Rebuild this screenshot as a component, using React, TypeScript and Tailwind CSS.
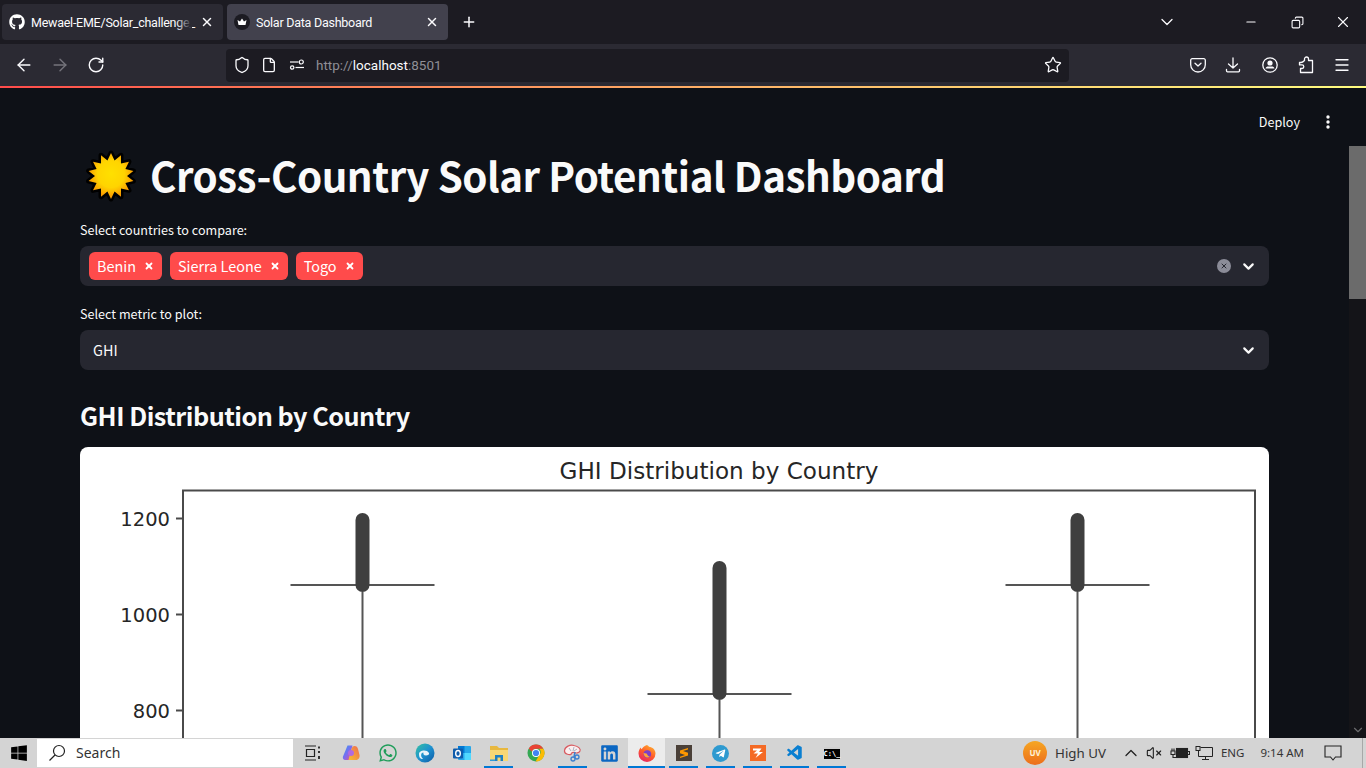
import React from "react";
import { ArrowLeft, ArrowRight, RotateCw, Shield, File, Star, Menu, ChevronDown, ChevronUp, Minus, X, Plus, Copy, VolumeX } from "lucide-react";
import { FaGithub, FaWindows, FaWhatsapp, FaLinkedin, FaTelegramPlane } from "react-icons/fa";
import { VscVscode } from "react-icons/vsc";

const chartFont = "DejaVu Sans, sans-serif";

function Sun() {
  const pts: string[] = [];
  const n = 14;
  for (let i = 0; i < n * 2; i++) {
    const r = i % 2 === 0 ? 23 : 16;
    const a = (i * Math.PI) / n - Math.PI / 2;
    pts.push(`${27 + r * Math.cos(a)},${27 + r * Math.sin(a)}`);
  }
  return (
    <svg width="54" height="54" viewBox="0 0 54 54" className="block">
      <defs>
        <radialGradient id="sung" cx="50%" cy="45%" r="50%">
          <stop offset="0%" stopColor="#ffe000" />
          <stop offset="60%" stopColor="#ffd400" />
          <stop offset="100%" stopColor="#fb9c00" />
        </radialGradient>
      </defs>
      <polygon points={pts.join(" ")} fill="#000" stroke="#000" strokeWidth="5" strokeLinejoin="round" />
      <polygon points={pts.join(" ")} fill="url(#sung)" />
    </svg>
  );
}

function Tag({ label }: { label: string }) {
  return (
    <div className="flex h-7 items-center rounded-md bg-[#ff4b4b] pl-2 pr-2 text-[14.400px] leading-7 text-white">
      <span>{label}</span>
      <X size={10} strokeWidth={1.8} absoluteStrokeWidth className="ml-[8px]" />
    </div>
  );
}

function Chevron() {
  return <ChevronDown size={17} strokeWidth={3} className="text-[#fafafa]" />;
}

function Pocket() {
  return (
    <svg width="16" height="16" viewBox="0 0 16 16" fill="none" stroke="#fbfbfe" strokeWidth="1.300" strokeLinejoin="round" strokeLinecap="round" className="block">
      <path d="M2.200 1.700h11.600a1.500 1.500 0 0 1 1.500 1.500v4.500a7.300 7.300 0 0 1-14.600 0V3.200a1.500 1.500 0 0 1 1.500-1.500z" />
      <path d="M5 6.200 8 9l3-2.800" />
    </svg>
  );
}

function DownloadIcon() {
  return (
    <svg width="16" height="16" viewBox="0 0 16 16" fill="none" stroke="#fbfbfe" strokeWidth="1.300" strokeLinecap="round" strokeLinejoin="round" className="block">
      <path d="M8 1v10M3.500 7 8 11l4.500-4" />
      <path d="M1.500 12.500v1.300c0 .6.400 1 1 1h11c.6 0 1-.4 1-1v-1.300" />
    </svg>
  );
}

function Account() {
  return (
    <svg width="16" height="16" viewBox="0 0 16 16" className="block">
      <circle cx="8" cy="8" r="7.200" fill="none" stroke="#fbfbfe" strokeWidth="1.300" />
      <circle cx="8" cy="6" r="2.600" fill="#fbfbfe" />
      <path d="M3.500 11.500c.5-1.500 1.500-2 2.500-2h4c1 0 2 .5 2.500 2z" fill="#fbfbfe" />
    </svg>
  );
}

function PuzzleIcon() {
  return (
    <svg width="16" height="18" viewBox="0 0 16 18" fill="none" stroke="#fbfbfe" strokeWidth="1.300" strokeLinejoin="round" className="block">
      <path d="M6.500 4.500V3a2 2 0 0 1 4 0v1.500H14.500V16.500H2.500V12.500H4a1.800 1.800 0 0 0 0-3.600H1.500V6.500H3c1 0 2-.5 3.500-2z" />
    </svg>
  );
}

function Sliders() {
  return (
    <svg width="16" height="16" viewBox="0 0 16 16" fill="none" stroke="#fbfbfe" strokeWidth="1.200" className="block">
      <path d="M1 5h8.500" />
      <circle cx="12.300" cy="5" r="2" />
      <circle cx="3.200" cy="10.500" r="1.700" />
      <path d="M6.500 10.500H15" />
    </svg>
  );
}

function Chart() {
  const stroke = "#4a4a4a";
  const boxes = [
    { x: 282.5, top: 66, bottom: 145, cap: 138 },
    { x: 639.5, top: 114, bottom: 253, cap: 247 },
    { x: 997.5, top: 66, bottom: 145, cap: 138 },
  ];
  return (
    <svg width="1189" height="300" viewBox="0 0 1189 300" className="block">
      <text x="639" y="32" textAnchor="middle" fontFamily={chartFont} fontSize="23.100" fill="#262626">GHI Distribution by Country</text>
      <path d="M103 300V43.500H1175V300" fill="none" stroke={stroke} strokeWidth="2" />
      {[{ y: 71.500, t: "1200" }, { y: 167.500, t: "1000" }, { y: 263.500, t: "800" }].map((k) => (
        <g key={k.t}>
          <path d={`M96 ${k.y}H103`} stroke={stroke} strokeWidth="2" />
          <text x="90" y={k.y + 7.500} textAnchor="end" fontFamily={chartFont} fontSize="19.500" fill="#262626">{k.t}</text>
        </g>
      ))}
      {boxes.map((b) => (
        <g key={b.x}>
          <path d={`M${b.x} ${b.bottom}V300`} stroke="#555" strokeWidth="2" />
          <path d={`M${b.x - 72} ${b.cap}H${b.x + 72}`} stroke="#555" strokeWidth="2" />
          <rect x={b.x - 7} y={b.top} width="14" height={b.bottom - b.top} rx="7" fill="#3f3f3f" />
        </g>
      ))}
    </svg>
  );
}

function TaskItem({ children, line, active }: { children: React.ReactNode; line?: boolean; active?: boolean }) {
  return (
    <div className={`relative flex h-[30px] w-[37px] shrink-0 items-center justify-center ${active ? "bg-[#ececec]" : ""}`}>
      {children}
      {line && <div className={`absolute bottom-0 h-[2px] bg-[#0078d4] ${active ? "inset-x-0" : "inset-x-[4px]"}`} />}
    </div>
  );
}

function CopilotIcon() {
  return (
    <svg width="18" height="18" viewBox="0 0 18 18">
      <defs>
        <linearGradient id="cp1" x1="0" y1="0" x2="1" y2="1"><stop offset="0" stopColor="#2d9cf0" /><stop offset="0.5" stopColor="#7a6df0" /><stop offset="1" stopColor="#f0508a" /></linearGradient>
        <linearGradient id="cp2" x1="0" y1="1" x2="1" y2="0"><stop offset="0" stopColor="#f5c030" /><stop offset="1" stopColor="#f06a50" /></linearGradient>
      </defs>
      <path d="M5.500 1.500h5L7 16H3.500C1 16 .5 14 1 12.500z" fill="url(#cp1)" />
      <path d="M12.500 2c2 0 3 1 3.500 3l1.500 6c.5 2.500-1 5-3.500 5H6.500l3-11c.5-2 1.500-3 3-3z" fill="url(#cp2)" />
      <circle cx="9" cy="9" r="3" fill="#b06ae0" />
    </svg>
  );
}

function EdgeIcon() {
  return (
    <svg width="20" height="20" viewBox="0 0 20 20">
      <defs>
        <linearGradient id="ed" x1="0" y1="0" x2="1" y2="1"><stop offset="0" stopColor="#35c1a0" /><stop offset="0.5" stopColor="#1e92d0" /><stop offset="1" stopColor="#0c59a4" /></linearGradient>
      </defs>
      <circle cx="10" cy="10" r="9.500" fill="url(#ed)" />
      <path d="M4 11c0-4 8-5 10-1 .6 1.500-1 2.500-3 2.500-2.500 0-3-2-2.500-3C6 9.500 5 13 8 16c-3 0-4-2-4-5z" fill="#e8f4fb" />
    </svg>
  );
}

function OutlookIcon() {
  return (
    <svg width="20" height="20" viewBox="0 0 20 20">
      <rect x="6" y="3" width="13" height="14" rx="1" fill="#28a8ea" />
      <rect x="6" y="3" width="6.500" height="7" fill="#0078d4" />
      <rect x="12.500" y="10" width="6.500" height="7" fill="#50d9ff" />
      <rect x="1" y="5.500" width="10" height="10" rx="1" fill="#0f5cab" />
      <ellipse cx="6" cy="10.500" rx="2.300" ry="3" fill="none" stroke="#fff" strokeWidth="1.400" />
    </svg>
  );
}

function FolderIcon() {
  return (
    <svg width="20" height="20" viewBox="0 0 20 20">
      <path d="M1 3h7l2 2h9v13H1z" fill="#e8b83f" />
      <path d="M1 7h18v11H1z" fill="#f8d775" />
      <path d="M6 12h8v6h-2.500v-3.500h-3V18H6z" fill="#1f7fc4" />
      <rect x="1" y="16.500" width="5" height="1.500" fill="#2e9ad8" />
    </svg>
  );
}

function ChromeIcon() {
  return (
    <svg width="18" height="18" viewBox="0 0 18 18">
      <circle cx="9" cy="9" r="8.500" fill="#34a853" />
      <path d="M9 .5a8.500 8.500 0 0 1 7.400 4.300H9a4.200 4.200 0 0 0-4 2.900L1.700 4.700A8.500 8.500 0 0 1 9 .5z" fill="#ea4335" />
      <path d="M16.400 4.800A8.500 8.500 0 0 1 8.500 17.500l3.700-6.300a4.200 4.200 0 0 0 0-6.400z" fill="#fbbc04" />
      <circle cx="9" cy="9" r="4" fill="#fff" />
      <circle cx="9" cy="9" r="3.100" fill="#4285f4" />
    </svg>
  );
}

function PaintIcon() {
  return (
    <svg width="20" height="20" viewBox="0 0 20 20" fill="none">
      <path d="M1.500 7.500C2 3.500 7 1.500 11 2.500c4 .8 7 3 6 5.500-1 2-4 2.500-6 1.500-2-.5-3 1-3 2-2 .5-7-.5-6.500-4z" stroke="#d85a60" strokeWidth="1.200" fill="#fbeeee" />
      <path d="M6 5l2 3M11 4l-1 4M14 6l-3 2" stroke="#a9b3c4" strokeWidth="1" />
      <path d="M12 9l-1 5" stroke="#3c7fcf" strokeWidth="1.500" />
      <circle cx="10" cy="16" r="2" stroke="#3c7fcf" strokeWidth="1.300" />
      <circle cx="14" cy="14" r="2" stroke="#3c7fcf" strokeWidth="1.300" />
    </svg>
  );
}

function FirefoxIcon() {
  return (
    <svg width="18" height="18" viewBox="0 0 18 18">
      <defs>
        <linearGradient id="ff" x1="0.800" y1="0" x2="0.200" y2="1"><stop offset="0" stopColor="#ffb02e" /><stop offset="0.500" stopColor="#ff5a2a" /><stop offset="1" stopColor="#e5216a" /></linearGradient>
      </defs>
      <path d="M9 1c1 .5 1.500 1 2 1.800 3.500.3 6.500 3 6.500 6.700A8.500 8.500 0 0 1 .5 9.500C.5 7 1.500 4.500 3 3.500c0 1 .3 1.500.7 1.800C4.500 3.500 6.500 1.500 9 1z" fill="url(#ff)" />
      <circle cx="9.300" cy="10" r="3.800" fill="#7b3fc8" />
      <path d="M5.500 9c1 0 2 .5 3 .5 1 .5 1 3 3.500 3-2 2-6 1.500-6.500-3.500z" fill="#ffa436" />
    </svg>
  );
}

function SublimeIcon() {
  return (
    <svg width="16" height="16" viewBox="0 0 16 16">
      <rect width="16" height="16" fill="#4a4038" />
      <path d="M12 3 4 5.500v2.800l5 1.700-5 1.700 0 1.300L12 10.500V7.700L7 6 12 4.400z" fill="#ff9800" />
    </svg>
  );
}

function ZapIcon() {
  return (
    <svg width="16" height="16" viewBox="0 0 16 16">
      <rect width="16" height="16" fill="#f46a25" />
      <path d="M3 3.500h8.500L9 7l4 0-7.500 6L8 8.500 3.500 8.500 7 5.500 3 5.500z" fill="#fff" />
    </svg>
  );
}

function CmdIcon() {
  return (
    <div className="flex h-[12px] w-[16px] flex-col bg-black">
      <div className="h-[2px] bg-[#cfcfcf]" />
      <span className="font-['DejaVu_Sans_Mono',monospace] text-[7px] font-bold leading-[10px] text-white">C:\_</span>
    </div>
  );
}

function TaskSearch() {
  return (
    <svg width="18" height="18" viewBox="0 0 18 18" fill="none" stroke="#222" strokeWidth="1.200" className="block">
      <circle cx="11" cy="7" r="5.500" />
      <path d="M7 11 1.500 16.500" />
    </svg>
  );
}

function TrayBattery() {
  return (
    <svg width="20" height="16" viewBox="0 0 20 16" fill="none" stroke="#222" strokeWidth="1.100" className="block">
      <rect x="6.500" y="3.500" width="11" height="9" fill="#222" />
      <path d="M18 6.500h1.500v3H18" />
      <path d="M1 6h4v3.500H1zM2 3.500V6M4 3.500V6M3 9.500v3h3.500" />
    </svg>
  );
}

function TrayNetwork() {
  return (
    <svg width="18" height="16" viewBox="0 0 18 16" fill="none" stroke="#222" strokeWidth="1" className="block">
      <path d="M5.500 2.500h12v9h-14V6" />
      <rect x="1" y="1.500" width="4" height="4" />
      <path d="M10.500 11.500V14M7 14.500h7" />
    </svg>
  );
}

function Notification() {
  return (
    <svg width="18" height="16" viewBox="0 0 18 16" fill="none" stroke="#222" strokeWidth="1.100" className="block">
      <path d="M1 1h16v11h-5.500L9 15l-2.500-3H1z" />
    </svg>
  );
}

export default function App() {
  return (
    <div className="flex h-[768px] w-[1366px] flex-col overflow-hidden bg-[#0e1117] font-['Noto_Sans',sans-serif]">
      {/* tab strip */}
      <div className="flex h-[44px] shrink-0 items-start bg-[#1c1b22] pl-[2px] pt-[4px] font-['Roboto',sans-serif] text-[#fbfbfe]">
        <div className="flex h-[36px] w-[221px] items-center rounded-[4px] bg-[#2b2a33] pl-[7px] pr-[9px]">
          <FaGithub size={16} className="shrink-0 text-white" />
          <div className="relative ml-[6px] w-[161px] whitespace-nowrap pt-[2px] text-[12.500px] leading-[20px] tracking-[-0.250px]">
            Mewael-EME/Solar_challenge_
            <div className="absolute inset-y-0 right-0 w-[16px] bg-gradient-to-r from-transparent to-[#2b2a33]" />
          </div>
          <X size={14} strokeWidth={1.5} absoluteStrokeWidth className="ml-auto shrink-0" />
        </div>
        <div className="ml-[4px] flex h-[36px] w-[221px] items-center rounded-[4px] bg-[#42414d] pl-[7px] pr-[9px]">
          <svg width="16" height="16" viewBox="0 0 16 16" className="shrink-0">
            <circle cx="8" cy="8" r="8" fill="#1c1b22" />
            <path d="M3.500 6l2.500 1.500L8 4.500l2 3L12.500 6l-1 5h-7z" fill="#fff" />
          </svg>
          <span className="ml-[6px] whitespace-nowrap pt-[2px] text-[12.500px] leading-[20px] tracking-[-0.250px]">Solar Data Dashboard</span>
          <X size={14} strokeWidth={1.5} absoluteStrokeWidth className="ml-auto shrink-0" />
        </div>
        <div className="ml-[13px] flex h-[36px] items-center">
          <Plus size={16} strokeWidth={1.5} absoluteStrokeWidth />
        </div>
        <div className="ml-auto flex h-[36px] items-center">
          <ChevronDown size={20} strokeWidth={1.3} absoluteStrokeWidth />
          <div className="ml-[51px] flex w-[46px] justify-center"><Minus size={14} strokeWidth={1.2} absoluteStrokeWidth /></div>
          <div className="flex w-[46px] justify-center"><Copy size={13} strokeWidth={1.1} absoluteStrokeWidth className="-scale-x-100" /></div>
          <div className="flex w-[46px] justify-center"><X size={18} strokeWidth={1.1} absoluteStrokeWidth /></div>
        </div>
      </div>

      {/* nav bar */}
      <div className="flex h-[42px] shrink-0 items-center bg-[#2b2a33] text-[#fbfbfe]">
        <div className="flex w-[226px] items-center">
          <ArrowLeft size={20} strokeWidth={1.4} absoluteStrokeWidth className="ml-[14px]" />
          <ArrowRight size={20} strokeWidth={1.4} absoluteStrokeWidth className="ml-[16px] text-[#75747c]" />
          <RotateCw size={18} strokeWidth={1.4} absoluteStrokeWidth className="ml-[17px]" />
        </div>
        <div className="flex h-[33px] w-[843px] items-center rounded-[4px] bg-[#1c1b22] pl-[7px] pr-[7px]">
          <Shield size={18} strokeWidth={1.3} absoluteStrokeWidth />
          <File size={16} strokeWidth={1.3} absoluteStrokeWidth className="ml-[10px]" />
          <div className="ml-[12px]"><Sliders /></div>
          <span className="ml-[11px] font-['Roboto',sans-serif] text-[13.500px] leading-[20px] text-[#8f8f96]">http://<span className="text-[#fbfbfe]">localhost</span>:8501</span>
          <Star size={18} strokeWidth={1.3} absoluteStrokeWidth className="ml-auto" />
        </div>
        <div className="ml-[121px] flex items-center">
          <Pocket />
          <div className="ml-[19px]"><DownloadIcon /></div>
          <div className="ml-[21px]"><Account /></div>
          <div className="ml-[20px]"><PuzzleIcon /></div>
          <Menu size={18} strokeWidth={1.3} absoluteStrokeWidth className="ml-[19px]" />
        </div>
      </div>

      {/* gradient */}
      <div className="h-[2px] shrink-0 bg-gradient-to-r from-[#ff4b4b] to-[#fffd80]" />

      {/* page */}
      <div className="flex min-h-0 flex-1 flex-col font-['Noto_Sans_CJK_SC',sans-serif] text-[#fafafa]">
        <div className="flex h-[58px] shrink-0 items-center justify-end pr-[27px] pt-[10px] text-[12.600px]">
          <span className="leading-[20px]">Deploy</span>
          <svg width="4" height="14" viewBox="0 0 4 14" className="ml-[26px]" fill="#fafafa">
            <circle cx="2" cy="2" r="1.700" /><circle cx="2" cy="7" r="1.700" /><circle cx="2" cy="12" r="1.700" />
          </svg>
          <div className="w-[9px]" />
        </div>
        <div className="flex min-h-0 flex-1">
          <div className="w-[1349px] overflow-hidden pl-[80px] pr-[80px]">
            <div className="flex h-[60px] items-center">
              <div className="ml-[4px]"><Sun /></div>
              <h1 className="ml-[12px] whitespace-nowrap pb-[3px] text-[40.300px] font-bold leading-[56px] tracking-[-0.480px] text-[#fafafa]">Cross-Country Solar Potential Dashboard</h1>
            </div>
            <label className="mt-[14px] block text-[12.600px] leading-[20px]">Select countries to compare:</label>
            <div className="mt-[6px] flex h-[40px] items-center rounded-lg bg-[#262730] pl-[9px] pr-[12px]">
              <div className="flex gap-[8px]">
                <Tag label="Benin" />
                <Tag label="Sierra Leone" />
                <Tag label="Togo" />
              </div>
              <div className="ml-auto flex h-[14px] w-[14px] items-center justify-center rounded-full bg-[#8b8c98]">
                <X size={8} strokeWidth={3} className="text-[#262730]" />
              </div>
              <div className="ml-[9px]"><Chevron /></div>
            </div>
            <label className="mt-[18px] block text-[12.600px] leading-[20px]">Select metric to plot:</label>
            <div className="mt-[6px] flex h-[40px] items-center justify-between rounded-lg bg-[#262730] pl-[13px] pr-[12px] text-[14.400px]">
              <span className="leading-[24px]">GHI</span>
              <Chevron />
            </div>
            <h3 className="mt-[25px] text-[25.200px] font-semibold leading-[40px] tracking-[-0.500px]">GHI Distribution by Country</h3>
            <div className="mt-[12px] h-[320px] overflow-hidden rounded-lg bg-white">
              <Chart />
            </div>
          </div>
          <div className="flex w-[17px] flex-col bg-[#141418]">
            <div className="h-[153px] bg-[#6b6b6b]" />
            <div className="mt-auto flex h-[17px] items-center justify-center">
              <ChevronDown size={14} strokeWidth={2} className="text-[#6a6a6d]" />
            </div>
          </div>
        </div>
      </div>

      {/* taskbar */}
      <div className="flex h-[30px] shrink-0 items-center bg-[#d4d4d4] text-[#222]">
        <div className="flex w-[37px] justify-center"><FaWindows size={18} className="text-black" /></div>
        <div className="flex h-[28px] w-[256px] items-center bg-white pl-[11px]">
          <TaskSearch />
          <span className="ml-[10px] text-[14px] leading-[20px] text-[#333]">Search</span>
        </div>
        <div className="flex h-[30px] w-[39px] items-center justify-center">
          <svg width="16" height="16" viewBox="0 0 16 16" fill="none" stroke="#222" strokeWidth="1.200">
            <path d="M0 1h11M0 15h11M1.500 4.500h8v7h-8z" /><path d="M14 1.500v2M14 6v2M14 11v3" strokeWidth="1.800" />
          </svg>
        </div>
        <TaskItem><CopilotIcon /></TaskItem>
        <TaskItem><FaWhatsapp size={20} className="text-[#1f9d5a]" /></TaskItem>
        <TaskItem><EdgeIcon /></TaskItem>
        <TaskItem><OutlookIcon /></TaskItem>
        <TaskItem line><FolderIcon /></TaskItem>
        <TaskItem><ChromeIcon /></TaskItem>
        <TaskItem line><PaintIcon /></TaskItem>
        <TaskItem><FaLinkedin size={19} className="text-[#0a66c2]" /></TaskItem>
        <TaskItem line active><FirefoxIcon /></TaskItem>
        <TaskItem line><SublimeIcon /></TaskItem>
        <TaskItem line>
          <div className="flex h-[17px] w-[17px] items-center justify-center rounded-full bg-[#2e9ad0]"><FaTelegramPlane size={11} className="text-white" /></div>
        </TaskItem>
        <TaskItem line><ZapIcon /></TaskItem>
        <TaskItem line><VscVscode size={18} className="text-[#0a7fd1]" /></TaskItem>
        <TaskItem line><CmdIcon /></TaskItem>
        <div className="ml-auto flex h-[30px] items-center">
          <div className="flex h-[24px] w-[24px] items-center justify-center rounded-full bg-gradient-to-b from-[#f5a623] to-[#ec6d1b] text-[8px] font-bold text-[#fff2d8]">UV</div>
          <span className="ml-[8px] text-[13.300px] leading-[20px] text-[#333]">High UV</span>
          <ChevronUp size={20} strokeWidth={1.3} absoluteStrokeWidth className="ml-[15px]" />
          <VolumeX size={16} strokeWidth={1.1} absoluteStrokeWidth className="ml-[5px]" />
          <div className="ml-[8px]"><TrayBattery /></div>
          <div className="ml-[5px]"><TrayNetwork /></div>
          <span className="ml-[8px] text-[11.500px] leading-[16px] text-[#333]">ENG</span>
          <span className="ml-[16px] text-[11.500px] leading-[16px] text-[#333]">9:14 AM</span>
          <div className="ml-[20px]"><Notification /></div>
          <div className="ml-[20px] h-[30px] w-[1px] bg-[#a8a8a8]" />
          <div className="w-[3px]" />
        </div>
      </div>
    </div>
  );
}
